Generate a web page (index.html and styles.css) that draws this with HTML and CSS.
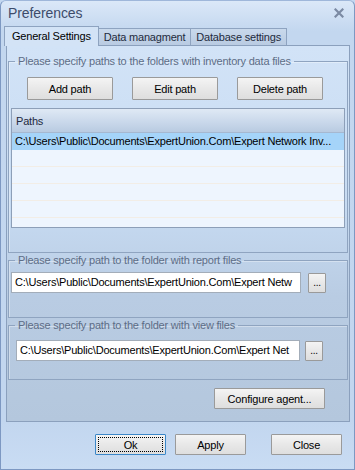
FILE: index.html
```html
<!DOCTYPE html>
<html lang="en">
<head>
    <meta charset="UTF-8">
    <title>Preferences</title>
    <link rel="stylesheet" href="styles.css">
</head>
<body>

    <div class="window">

        <!-- Barra de título -->
        <div class="titlebar">
            <span class="title">Preferences</span>
            <svg class="close-icon" viewBox="0 0 10 10" width="10" height="10">
                <path d="M1.5 1.5 L8.5 8.5 M8.5 1.5 L1.5 8.5" stroke="#7b8aa3" stroke-width="2.2" stroke-linecap="square"/>
            </svg>
        </div>

        <!-- Abas -->
        <div class="tabs">
            <div class="tab active">General Settings</div>
            <div class="tab">Data managment</div>
            <div class="tab">Database settings</div>
        </div>

        <div class="panel">

            <fieldset class="group group-paths">
                <legend>Please specify paths to the folders with inventory data files</legend>
                <div class="path-buttons">
                    <button class="btn">Add path</button>
                    <button class="btn">Edit path</button>
                    <button class="btn">Delete path</button>
                </div>
                <div class="list">
                    <div class="list-head">Paths</div>
                    <div class="list-row selected">C:\Users\Public\Documents\ExpertUnion.Com\Expert Network Inv...</div>
                    <div class="list-row"></div>
                    <div class="list-row"></div>
                    <div class="list-row"></div>
                    <div class="list-row"></div>
                </div>
            </fieldset>

            <fieldset class="group group-report">
                <legend>Please specify path to the folder with report files</legend>
                <div class="field-row">
                    <div class="path-input">C:\Users\Public\Documents\ExpertUnion.Com\Expert Netw</div>
                    <button class="btn btn-browse">...</button>
                </div>
            </fieldset>

            <fieldset class="group group-view">
                <legend>Please specify path to the folder with view files</legend>
                <div class="field-row">
                    <div class="path-input">C:\Users\Public\Documents\ExpertUnion.Com\Expert Net</div>
                    <button class="btn btn-browse">...</button>
                </div>
            </fieldset>

            <div class="agent-row">
                <button class="btn btn-agent">Configure agent...</button>
            </div>
        </div>

        <!-- Botões do rodapé -->
        <div class="footer">
            <button class="btn btn-footer btn-ok"><span class="focus-ring">Ok</span></button>
            <button class="btn btn-footer btn-apply">Apply</button>
            <button class="btn btn-footer">Close</button>
        </div>
    </div>

</body>
</html>
```

FILE: styles.css
```css
/* --- Geral --- */
* {
    margin: 0;
    padding: 0;
    box-sizing: border-box;
}

body {
    font-family: 'Liberation Sans', Arial, sans-serif;
    font-size: 11px;
    letter-spacing: -0.2px;
    color: #000;
    background: #c4d8f0;
}

.window {
    width: 355px;
    height: 470px;
    display: flex;
    flex-direction: column;
    padding: 0 3px 4px 3px;
    border: 1px solid #7d98c2;
    border-top-color: #9fb7da;
    background: linear-gradient(#dbe8f8, #c3d7ef 30px, #c2d6ef 420px, #c9dcf3);
    border-radius: 6px 6px 0 0;
}

/* --- Barra de título --- */
.titlebar {
    height: 24px;
    display: flex;
    align-items: center;
    justify-content: space-between;
    padding: 0 7px 0 4px;
}
.title {
    font-size: 14px;
    letter-spacing: -0.1px;
    color: #3d4c6b;
}
.close-icon {
    margin-top: -1px;
}

/* --- Abas --- */
.tabs {
    display: flex;
    align-items: flex-end;
    height: 20px;
    position: relative;
    z-index: 1;
}
.tab {
    height: 17px;
    padding: 0 5px;
    border: 1px solid #8ea3c0;
    border-bottom: none;
    background: linear-gradient(#c9d9ec, #b9cbe2);
    color: #1f2b3d;
    line-height: 16px;
    margin-left: -1px;
}
.tab:first-child {
    margin-left: 0;
}
.tab.active {
    height: 20px;
    line-height: 18px;
    padding: 0 7px;
    background: #d3e3f6;
    color: #000;
    margin-bottom: -1px;
}

/* --- Painel da aba --- */
.panel {
    margin: 0 1px 0 2px;
    height: 377px;
    border: 1px solid #8ba0bd;
    background: linear-gradient(#d2e3f7, #c7dbf2 160px, #b9cce3 250px, #b4c7dd);
    padding: 8px 1px 0 1px;
    display: flex;
    flex-direction: column;
}

/* --- Grupos (fieldset) --- */
.group {
    border: 1px solid #8fa4c0;
    box-shadow: inset 1px 1px 0 rgba(255, 255, 255, 0.35);
    padding: 0;
    min-width: 0;
}
.group legend {
    margin-left: 6px;
    padding: 0 3px;
    line-height: 14px;
    color: #5d6d86;
}
.group-paths {
    height: 199px;
}
.group-report {
    height: 65px;
}
.group-view {
    height: 62px;
}

.path-buttons {
    display: flex;
    gap: 19px;
    padding: 9px 0 0 18px;
}
.btn {
    font-family: inherit;
    font-size: 11px;
    letter-spacing: -0.2px;
    color: #000;
    height: 23px;
    border: 1px solid #9a9a9a;
    background: linear-gradient(#f4f4f4, #e8e8e8 50%, #dedede);
    border-radius: 1px;
}
.path-buttons .btn {
    width: 86px;
}

/* --- Lista de caminhos --- */
.list {
    margin: 8px 2px 0 2px;
    height: 120px;
    border: 1px solid #8d9fb8;
    background: #eef5fe;
    overflow: hidden;
}
.list-head {
    height: 24px;
    line-height: 24px;
    padding-left: 4px;
    background: linear-gradient(#dfe9f5, #c8d7ea 60%, #b9cbe1);
    border-bottom: 1px solid #a6b8d0;
    color: #1d2a3e;
}
.list-row {
    height: 17px;
    line-height: 17px;
    padding-left: 3px;
    white-space: nowrap;
    overflow: hidden;
    border-bottom: 1px solid #f2ede6;
}
.list-row.selected {
    background: #a5d4f9;
    border-bottom-color: #a5d4f9;
}

/* --- Campos de caminho --- */
.field-row {
    display: flex;
    align-items: center;
    gap: 7px;
    padding: 5px 0 0 2px;
}
.group-view .field-row {
    padding: 8px 0 0 7px;
    gap: 5px;
}
.path-input {
    width: 290px;
    height: 21px;
    line-height: 19px;
    padding-left: 3px;
    border: 1px solid #a3adb9;
    background: #fff;
    white-space: nowrap;
    overflow: hidden;
}
.group-view .path-input {
    width: 284px;
}
.btn-browse {
    width: 18px;
    height: 20px;
    padding: 0;
    font-size: 10px;
    line-height: 14px;
}

/* --- Botão configurar agente --- */
.agent-row {
    display: flex;
    justify-content: flex-end;
    padding: 8px 23px 0 0;
}
.btn-agent {
    width: 111px;
    height: 21px;
}

/* --- Rodapé --- */
.footer {
    flex: 1;
    display: flex;
    justify-content: flex-end;
    align-items: flex-start;
    padding: 12px 9px 0 0;
    gap: 9px;
}
.btn-footer {
    width: 71px;
    height: 21px;
}
.btn-apply {
    margin-right: 16px;
}
.btn-ok {
    border: 1px solid #3b87c8;
    padding: 2px;
}
.focus-ring {
    display: flex;
    align-items: center;
    justify-content: center;
    height: 100%;
    border: 1px dotted #000;
}
```
